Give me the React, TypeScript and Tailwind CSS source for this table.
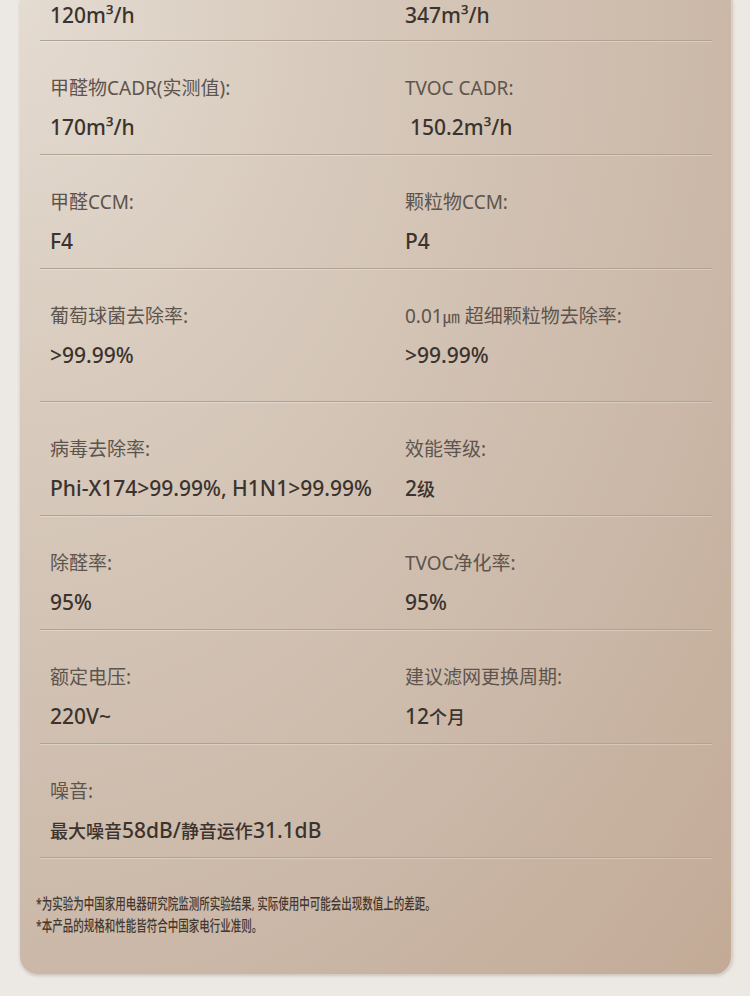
import React from "react";

type Cell = { label?: React.ReactNode; value: React.ReactNode; valueClass?: string };
type Row = { left: Cell; right?: Cell; extraBottom?: boolean };

const Cjk = ({ children }: { children: React.ReactNode }) => (
  <span className="text-[18px]">{children}</span>
);

const rows: Row[] = [
  {
    left: { label: "甲醛物CADR(实测值):", value: "170m³/h" },
    right: { label: "TVOC CADR:", value: "150.2m³/h", valueClass: "pl-[5px]" },
  },
  {
    left: { label: "甲醛CCM:", value: "F4" },
    right: { label: "颗粒物CCM:", value: "P4" },
  },
  {
    left: { label: "葡萄球菌去除率:", value: ">99.99%" },
    right: {
      label: (
        <>
          0.01<span className="text-[17px]">㎛</span> 超细颗粒物去除率:
        </>
      ),
      value: ">99.99%",
    },
    extraBottom: true,
  },
  {
    left: { label: "病毒去除率:", value: "Phi-X174>99.99%, H1N1>99.99%" },
    right: {
      label: "效能等级:",
      value: (
        <>
          2<Cjk>级</Cjk>
        </>
      ),
    },
  },
  {
    left: { label: "除醛率:", value: "95%" },
    right: { label: "TVOC净化率:", value: "95%" },
  },
  {
    left: { label: "额定电压:", value: "220V~" },
    right: {
      label: "建议滤网更换周期:",
      value: (
        <>
          12<Cjk>个月</Cjk>
        </>
      ),
    },
  },
  {
    left: {
      label: "噪音:",
      value: (
        <>
          <Cjk>最大噪音</Cjk>58dB/<Cjk>静音运作</Cjk>31.1dB
        </>
      ),
    },
  },
];

const divider =
  "border-b border-[#b2a293] shadow-[0_1px_0_rgba(255,255,255,0.28)]";

const valueCls =
  "h-[24px] leading-[24px] text-[21px] font-medium text-[#3b332e] whitespace-nowrap";

function CellView({ cell }: { cell?: Cell }) {
  if (!cell) return <div />;
  return (
    <div className="pl-[10px]">
      <div className="h-[24px] leading-[24px] text-[19px] text-[#5d544d] whitespace-nowrap">
        {cell.label}
      </div>
      <div className={"mt-[15px] " + valueCls + " " + (cell.valueClass ?? "")}>
        {cell.value}
      </div>
    </div>
  );
}

export default function App() {
  return (
    <div
      className="min-h-[996px] w-[750px] bg-[#ece8e3] pl-[20px] pr-[17px] pb-[20px]"
      style={{ fontFamily: '"Noto Sans", "Noto Sans CJK SC", sans-serif' }}
    >
      <div className="rounded-b-[18px] border-r-[2px] border-[#dcd0c5] bg-[radial-gradient(ellipse_at_top_left,#e4dbd1_0%,#d6c8ba_35%,#cbb8a8_70%,#c2aa96_100%)] pl-[20px] pr-[19px] pb-[38px] shadow-[0_2px_3px_rgba(120,100,80,0.25)]">
        <div className={"grid grid-cols-[355px_1fr] pt-[3px] pb-[13px] " + divider}>
          <div className={"pl-[10px] " + valueCls}>120m³/h</div>
          <div className={"pl-[10px] " + valueCls}>347m³/h</div>
        </div>
        {rows.map((r, i) => (
          <div
            key={i}
            className={
              "grid grid-cols-[355px_1fr] pt-[35px] " +
              (r.extraBottom ? "pb-[34px] " : "pb-[15px] ") +
              divider
            }
          >
            <CellView cell={r.left} />
            <CellView cell={r.right} />
          </div>
        ))}
        <div className="mt-[34px] -ml-[4px] text-[15px] leading-[22px] font-medium text-[#43382f] origin-left scale-x-[0.7] whitespace-nowrap">
          <div>*为实验为中国家用电器研究院监测所实验结果, 实际使用中可能会出现数值上的差距。</div>
          <div>*本产品的规格和性能皆符合中国家电行业准则。</div>
        </div>
      </div>
    </div>
  );
}
